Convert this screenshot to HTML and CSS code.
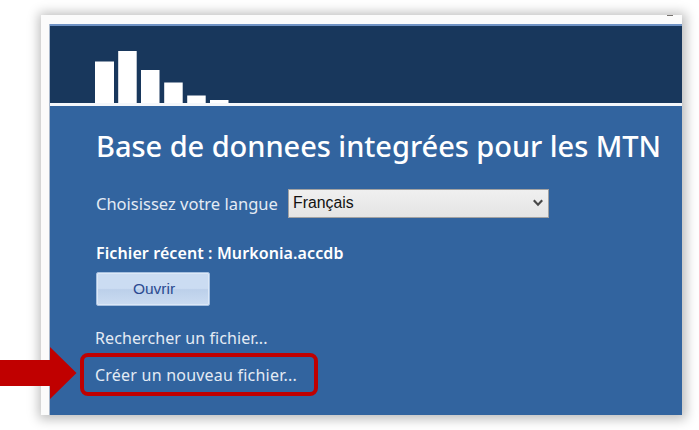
FILE: index.html
```
<!DOCTYPE html>
<html lang="fr">
<head>
<meta charset="utf-8">
<title>Base de donnees integrées pour les MTN</title>
<link rel="stylesheet" href="styles.css">
</head>
<body>
<main class="window">
  <div class="titlebar"><span class="control"></span></div>
  <div class="client">
    <header class="banner">
      <svg class="logo" width="134" height="52" viewBox="0 0 134 52" fill="#fff">
        <path d="M0 10.500h19V52H0zM23.200 0h18.500v52H23.200zM46 19h18.500v33H46zM69.200 31.500h18.500v20.500h-18.500zM92.200 44.500h18.500V52H92.200zM115 49h18.500v3H115z"/>
      </svg>
    </header>
    <section class="content">
      <h1 class="title">Base de donnees integrées pour les MTN</h1>
      <div class="language">
        <span class="label">Choisissez votre langue</span>
        <div class="select"><span class="value">Français</span>
          <svg width="10" height="8" viewBox="0 0 10 8" fill="none" stroke="#484848" stroke-width="2.200"><path d="M.8 1.300 5 5.700 9.200 1.300"/></svg>
        </div>
      </div>
      <div class="recent">Fichier récent : Murkonia.accdb</div>
      <button class="open">Ouvrir</button>
      <a class="link search">Rechercher un fichier...</a>
      <a class="link create">Créer un nouveau fichier...</a>
    </section>
  </div>
</main>
<div class="highlight"></div>
<svg class="arrow" width="77" height="54" viewBox="0 0 77 54"><path fill="#c00000" d="M0 14h50V1l26.500 26L50 53V40H0z"/></svg>
</body>
</html>
```
FILE: styles.css
```
* { box-sizing: border-box; }
body {
  margin: 0;
  width: 699px;
  height: 430px;
  padding: 15px 17px 15px 41px;
  overflow: hidden;
  background: #fff;
  font-family: "Noto Sans", "Open Sans", sans-serif;
}
.window {
  height: 400px;
  background: #fbfbfb;
  box-shadow: 1px 1px 11px 3px rgba(0, 0, 0, .27);
}
.titlebar {
  display: flex;
  justify-content: flex-end;
  height: 9px;
  padding-right: 9px;
}
.control { width: 6px; height: 1px; background: #77736f; }
.client {
  height: 391px;
  margin-left: 8px;
  border-left: 1px solid #a9b8cc;
  background: #32649f;
}
.banner {
  display: flex;
  align-items: flex-end;
  height: 82px;
  padding-left: 45px;
  border-top: 2px solid #6f92c4;
  border-bottom: 3px solid #f4f7fb;
  background: #18375c;
}
.logo { display: block; }
.content {
  display: flex;
  flex-direction: column;
  align-items: flex-start;
  padding: 19px 0 0 46px;
  color: #fff;
}
.title {
  margin: 0;
  height: 42px;
  line-height: 42px;
  font-size: 29px;
  font-weight: 500;
  letter-spacing: -.04px;
  white-space: nowrap;
}
.language {
  display: flex;
  align-items: center;
  gap: 9px;
  height: 30px;
  margin-top: 21px;
}
.label {
  width: 183px;
  font-size: 16.500px;
  color: #e4ebf4;
  white-space: nowrap;
}
.select {
  display: flex;
  align-items: center;
  justify-content: space-between;
  width: 261px;
  height: 29px;
  padding: 0 5px 0 4px;
  border: 1px solid #a2a2a2;
  background: linear-gradient(#f0f0f0, #e4e4e4);
  font: 15.800px "Liberation Sans", sans-serif;
  color: #111;
}
.recent {
  height: 24px;
  margin-top: 23px;
  line-height: 24px;
  font-size: 16px;
  font-weight: 600;
  letter-spacing: .1px;
  white-space: nowrap;
}
.open {
  width: 114px;
  height: 34px;
  margin: 7px 0 0;
  padding: 0 0 0 2px;
  border: 1px solid #a5bfdf;
  border-radius: 2px;
  background: linear-gradient(#cbdcf2 0 48%, #bcd0ea 52%, #cbdcf2);
  box-shadow: inset 0 0 0 1px #dce8f7;
  font: 15.500px "Liberation Sans", sans-serif;
  color: #2b4b91;
}
.link {
  height: 24px;
  margin-left: -1px;
  line-height: 24px;
  font-size: 16px;
  color: #e4ebf4;
  white-space: nowrap;
}
.search { margin-top: 20px; letter-spacing: .09px; }
.create { margin-top: 13px; letter-spacing: .22px; }
.highlight {
  position: absolute;
  left: 80px;
  top: 353px;
  width: 238px;
  height: 43px;
  border: 4px solid #c00000;
  border-radius: 8px;
}
.arrow { position: absolute; left: 0; top: 346px; }
```
